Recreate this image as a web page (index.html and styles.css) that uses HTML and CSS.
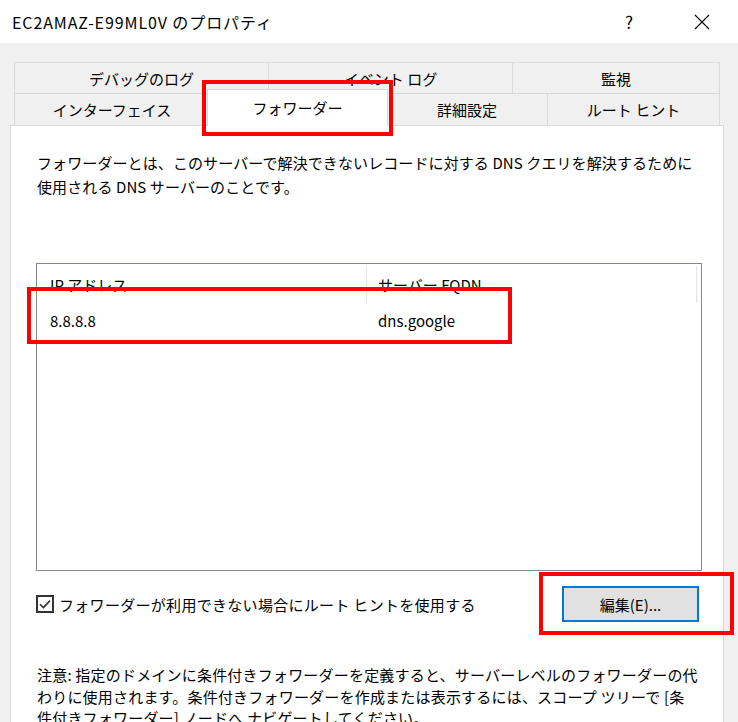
FILE: index.html
```html
<!DOCTYPE html>
<html lang="ja">
<head>
    <meta charset="UTF-8">
    <meta name="viewport" content="width=device-width, initial-scale=1.0">
    <title>EC2AMAZ-E99ML0V のプロパティ</title>
    <link rel="stylesheet" href="styles.css">
</head>
<body>
    <div class="window">
        <div class="titlebar">
            <span class="title">EC2AMAZ-E99ML0V のプロパティ</span>
            <div class="title-buttons">
                <span class="tb-btn help">?</span>
                <span class="tb-btn close">
                    <svg width="16" height="16" viewBox="0 0 16 16">
                        <path d="M1 1 L15 15 M15 1 L1 15" stroke="#000" stroke-width="1.2" fill="none"/>
                    </svg>
                </span>
            </div>
        </div>

        <div class="dialog">
            <div class="tabs">
                <div class="tab-row row-back">
                    <div class="tab">デバッグのログ</div>
                    <div class="tab">イベント ログ</div>
                    <div class="tab">監視</div>
                </div>
                <div class="tab-row row-front">
                    <div class="tab">インターフェイス</div>
                    <div class="tab selected">フォワーダー</div>
                    <div class="tab">詳細設定</div>
                    <div class="tab">ルート ヒント</div>
                </div>
            </div>

            <div class="panel">
                <p class="desc">フォワーダーとは、このサーバーで解決できないレコードに対する DNS クエリを解決するために<br>使用される DNS サーバーのことです。</p>

                <div class="listbox">
                    <div class="list-header">
                        <div class="col col-ip">IP アドレス</div>
                        <div class="col col-fqdn">サーバー FQDN</div>
                    </div>
                    <div class="list-row">
                        <div class="col col-ip">8.8.8.8</div>
                        <div class="col col-fqdn">dns.google</div>
                    </div>
                </div>

                <div class="options">
                    <label class="check">
                        <span class="box">
                            <svg width="14" height="14" viewBox="0 0 14 14">
                                <path d="M2 7.2 L5.4 10.6 L12 3.6" stroke="#333" stroke-width="1.6" fill="none"/>
                            </svg>
                        </span>
                        フォワーダーが利用できない場合にルート ヒントを使用する
                    </label>
                    <button class="edit-btn">編集(E)...</button>
                </div>

                <p class="note">注意: 指定のドメインに条件付きフォワーダーを定義すると、サーバーレベルのフォワーダーの代<br>わりに使用されます。条件付きフォワーダーを作成または表示するには、スコープ ツリーで [条<br>件付きフォワーダー] ノードへ ナビゲートしてください。</p>
            </div>
        </div>

        <!-- annotation boxes -->
        <div class="mark mark-tab"></div>
        <div class="mark mark-row"></div>
        <div class="mark mark-btn"></div>
    </div>
</body>
</html>
```

FILE: styles.css
```css
body {
    margin: 0;
    font-family: "Noto Sans CJK JP", "Noto Sans", sans-serif;
    color: #000;
    background-color: #f0f0f0;
}
.window {
    position: relative;
    width: 738px;
    height: 722px;
    overflow: hidden;
    background-color: #f0f0f0;
}
.titlebar {
    height: 43px;
    background-color: #fff;
    display: flex;
    align-items: center;
    justify-content: space-between;
    padding-left: 12px;
}
.title {
    font-size: 16px;
    letter-spacing: 0.9px;
}
.title-buttons {
    display: flex;
    margin-right: 13px;
}
.tb-btn {
    width: 46px;
    height: 43px;
    display: flex;
    align-items: center;
    justify-content: center;
}
.help {
    font-size: 17px;
    margin-right: 27px;
}
.dialog {
    padding: 19px 0 0 10px;
}
.tabs {
    margin: 0 4px;
}
.tab-row {
    display: grid;
}
.row-back {
    grid-template-columns: 254px 244px 208px;
    height: 31px;
}
.row-front {
    grid-template-columns: 195px 177px 161px 173px;
    height: 32px;
}
.tab {
    display: flex;
    align-items: center;
    justify-content: center;
    font-size: 15px;
    border-top: 1px solid #d9d9d9;
    border-left: 1px solid #d9d9d9;
    background-color: #f0f0f0;
}
.tab:last-child {
    border-right: 1px solid #d9d9d9;
}
.tab.selected {
    position: relative;
    z-index: 1;
    margin: -4px -2px -1px -2px;
    background-color: #fff;
    border-right: 1px solid #d9d9d9;
    padding-bottom: 2px;
}
.panel {
    width: 711px;
    height: 620px;
    background-color: #fff;
    border: 1px solid #d9d9d9;
    padding-left: 1px;
}
.desc {
    margin: 25px 0 0 25px;
    font-size: 15px;
    line-height: 24px;
    letter-spacing: 0.1px;
    white-space: nowrap;
}
.listbox {
    margin: 64px 0 0 24px;
    width: 664px;
    height: 306px;
    border: 1px solid #828790;
    background-color: #fff;
}
.list-header,
.list-row {
    display: grid;
    grid-template-columns: 330px 330px;
    font-size: 15px;
}
.list-header {
    height: 39px;
}
.list-header .col {
    border-right: 1px solid #e5e5e5;
    margin-top: 2px;
}
.list-row {
    height: 34px;
}
.col {
    display: flex;
    align-items: center;
    padding-left: 13px;
}
.col-fqdn {
    padding-left: 11px;
}
.options {
    display: flex;
    align-items: center;
    justify-content: space-between;
    margin: 15px 0 0 24px;
    width: 663px;
}
.check {
    display: flex;
    align-items: center;
    gap: 5px;
    font-size: 15px;
    letter-spacing: 0.3px;
}
.box {
    width: 18px;
    height: 18px;
    box-sizing: border-box;
    border: 2px solid #333;
    display: flex;
    align-items: center;
    justify-content: center;
    background-color: #fff;
}
.edit-btn {
    width: 137px;
    height: 36px;
    border: 2px solid #0078d7;
    background-color: #e1e1e1;
    font-family: inherit;
    font-size: 15px;
    color: #000;
    padding: 0;
}
.note {
    margin: 42px 0 0 25px;
    font-size: 15px;
    line-height: 21.5px;
    letter-spacing: 0.2px;
    white-space: nowrap;
}
.mark {
    position: absolute;
    border: 4px solid #ff0000;
    box-sizing: border-box;
    z-index: 5;
}
.mark-tab {
    left: 202px;
    top: 80px;
    width: 191px;
    height: 56px;
}
.mark-row {
    left: 27px;
    top: 287px;
    width: 485px;
    height: 57px;
}
.mark-btn {
    left: 539px;
    top: 572px;
    width: 195px;
    height: 63px;
}
```
